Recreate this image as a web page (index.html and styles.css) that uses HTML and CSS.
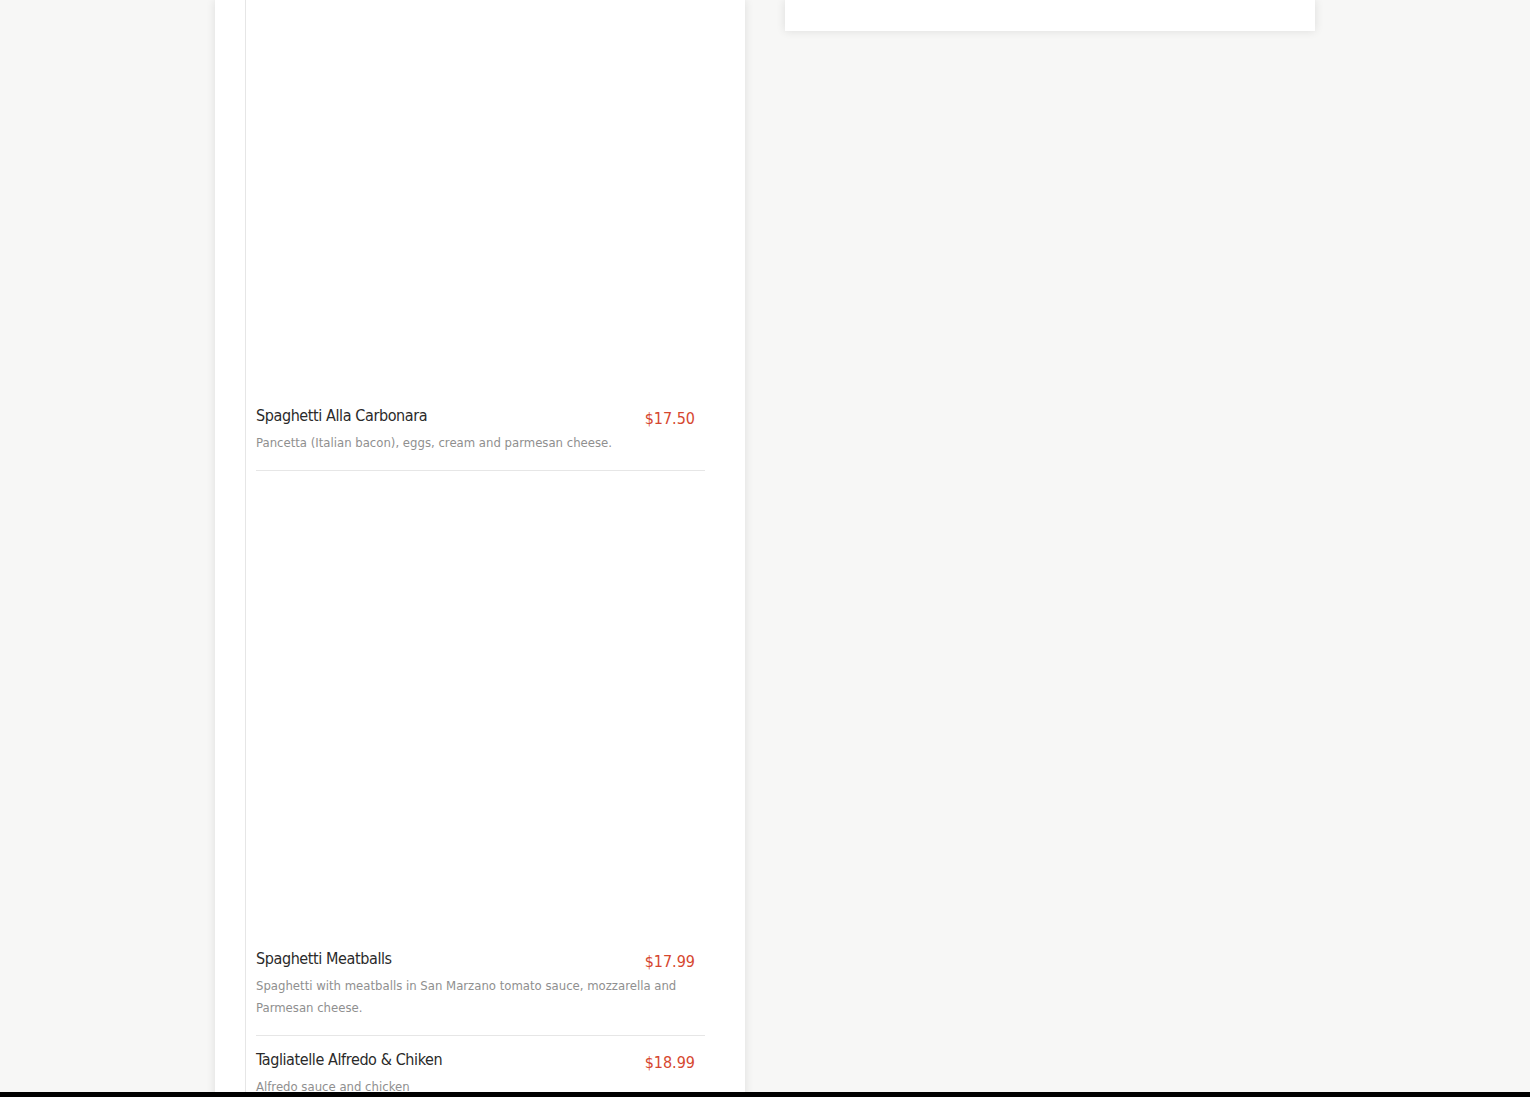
FILE: index.html
```html
<!DOCTYPE html>
<html lang="en">
<head>
<meta charset="utf-8">
<title>Menu</title>
<link rel="stylesheet" href="styles.css">
</head>
<body>
<div class="wrap">
  <div class="card menu">
    <div class="list">
      <div class="item">
        <div class="item-img cut"></div>
        <div class="item-head">
          <span class="name">Spaghetti Alla Carbonara</span>
          <span class="price">$17.50</span>
        </div>
        <p class="desc">Pancetta (Italian bacon), eggs, cream and parmesan cheese.</p>
      </div>
      <div class="item">
        <div class="item-img"></div>
        <div class="item-head">
          <span class="name">Spaghetti Meatballs</span>
          <span class="price">$17.99</span>
        </div>
        <p class="desc">Spaghetti with meatballs in San Marzano tomato sauce, mozzarella and Parmesan cheese.</p>
      </div>
      <div class="item">
        <div class="item-head">
          <span class="name">Tagliatelle Alfredo &amp; Chiken</span>
          <span class="price">$18.99</span>
        </div>
        <p class="desc">Alfredo sauce and chicken</p>
      </div>
    </div>
  </div>
  <div class="card side"></div>
</div>
<div class="bottom-bar"></div>
</body>
</html>
```
FILE: styles.css
```css
html, body {
  margin: 0;
  padding: 0;
  overflow: hidden;
}
body {
  background: #f7f7f6;
  font-family: "Liberation Sans Narrow", "DejaVu Sans Condensed", "Liberation Sans", sans-serif;
  color: #222;
}
.wrap {
  width: 1100px;
  margin: 0 auto;
  display: grid;
  grid-template-columns: 530px 530px;
  column-gap: 40px;
  align-items: start;
}
.card {
  background: #fff;
  box-shadow: 0 0 9px rgba(0, 0, 0, 0.11);
}
.menu {
  padding: 0 40px 40px 30px;
}
.side {
  height: 31px;
}
.list {
  border-left: 1px solid #e6e6e6;
  padding-left: 10px;
}
.item {
  padding: 11px 0 16px;
  border-bottom: 1px solid #e6e6e6;
}
.item-img {
  height: 464px;
}
.item-img.cut {
  height: 392px;
}
.item-head {
  display: flex;
  justify-content: space-between;
  align-items: flex-start;
  height: 26px;
}
.name {
  font-size: 16px;
  line-height: 26px;
  letter-spacing: -0.4px;
  color: #2a2a2a;
}
.price {
  font-size: 16px;
  line-height: 26px;
  margin-top: 3px;
  padding-right: 10px;
  color: #d6472f;
}
.desc {
  margin: 3px 0 0;
  font-size: 13px;
  line-height: 22px;
  color: #8f8f8f;
  padding-right: 20px;
}
.bottom-bar {
  position: fixed;
  left: 0;
  right: 0;
  bottom: 0;
  height: 5px;
  background: #000;
}
```
